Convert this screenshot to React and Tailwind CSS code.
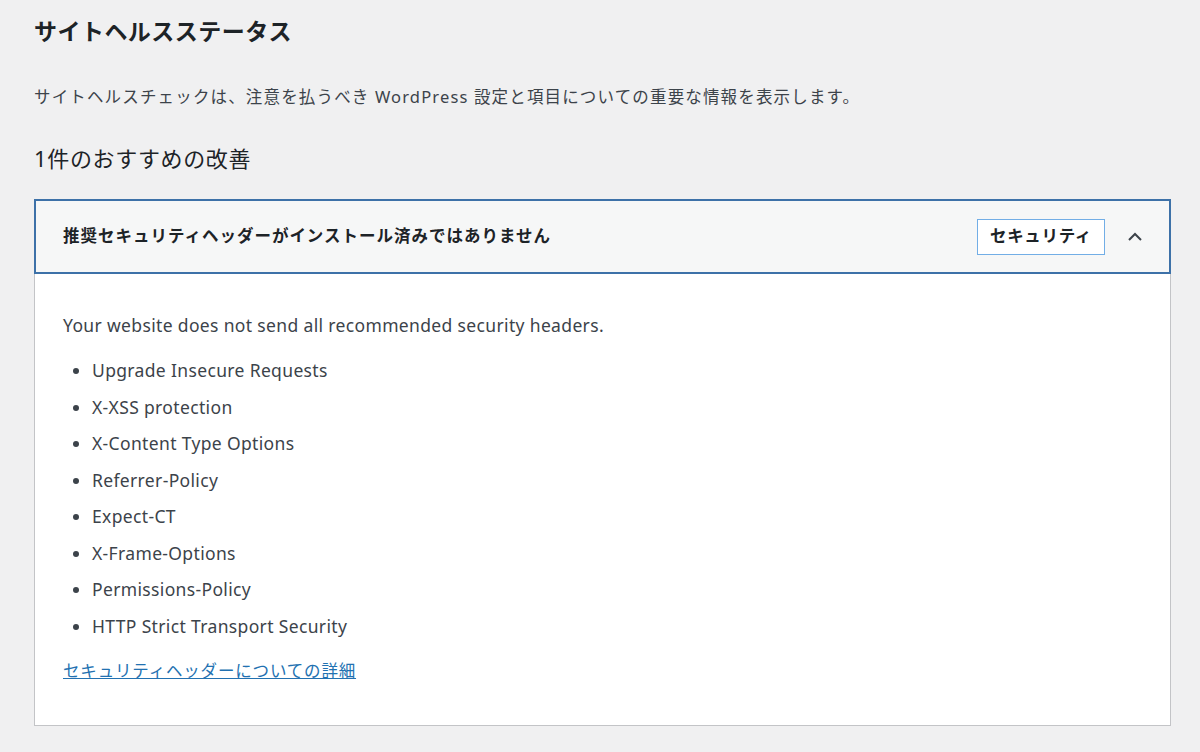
export default function App() {
  const items = [
    'Upgrade Insecure Requests',
    'X-XSS protection',
    'X-Content Type Options',
    'Referrer-Policy',
    'Expect-CT',
    'X-Frame-Options',
    'Permissions-Policy',
    'HTTP Strict Transport Security',
  ];
  return (
    <div
      className="min-h-[752px] bg-[#f0f0f1] text-[#1d2327] px-[34px] pt-[14px]"
      style={{ fontFamily: '"Noto Sans", "Noto Sans CJK JP", sans-serif' }}
    >
      <h1 className="text-[23px] font-bold leading-[34px] tracking-[0.02em]">サイトヘルスステータス</h1>
      <p className="mt-[37px] text-[16.5px] leading-[24px] text-[#3c434a] tracking-[0.07em]">
        サイトヘルスチェックは、注意を払うべき WordPress 設定と項目についての重要な情報を表示します。
      </p>
      <h2 className="mt-[34px] text-[22px] leading-[30px] tracking-[0.03em]">1件のおすすめの改善</h2>
      <div className="mt-[26px] w-[1137px] bg-white border border-[#c3c4c7]">
        <div className="h-[75px] -m-px border-2 border-[#3d71a8] bg-[#f6f7f7] flex items-center pl-[27px] pr-[22px]">
          <span className="flex-1 text-[16.5px] font-bold tracking-[0.06em]">推奨セキュリティヘッダーがインストール済みではありません</span>
          <span className="h-[36px] px-[12px] border border-[#72aee6] bg-white flex items-center text-[16.5px] font-bold tracking-[0.04em]">セキュリティ</span>
          <svg className="ml-[18px]" width="24" height="24" viewBox="0 0 24 24" fill="none" stroke="#3c434a" strokeWidth="2">
            <path d="M6 15l6-6 6 6" />
          </svg>
        </div>
        <div className="px-[28px] pt-[40px] pb-[42px] text-[17.5px] text-[#3c434a] tracking-[0.02em]">
          <p className="leading-[24px]">Your website does not send all recommended security headers.</p>
          <ul className="mt-[21px] pl-[29px] list-disc">
            {items.map((t) => (
              <li key={t} className="leading-[24px] mb-[12.5px]">{t}</li>
            ))}
          </ul>
          <a href="#" className="block mt-[21px] text-[#2271b1] underline leading-[24px] text-[16.5px] tracking-[0.05em]">
            セキュリティヘッダーについての詳細
          </a>
        </div>
      </div>
    </div>
  );
}
